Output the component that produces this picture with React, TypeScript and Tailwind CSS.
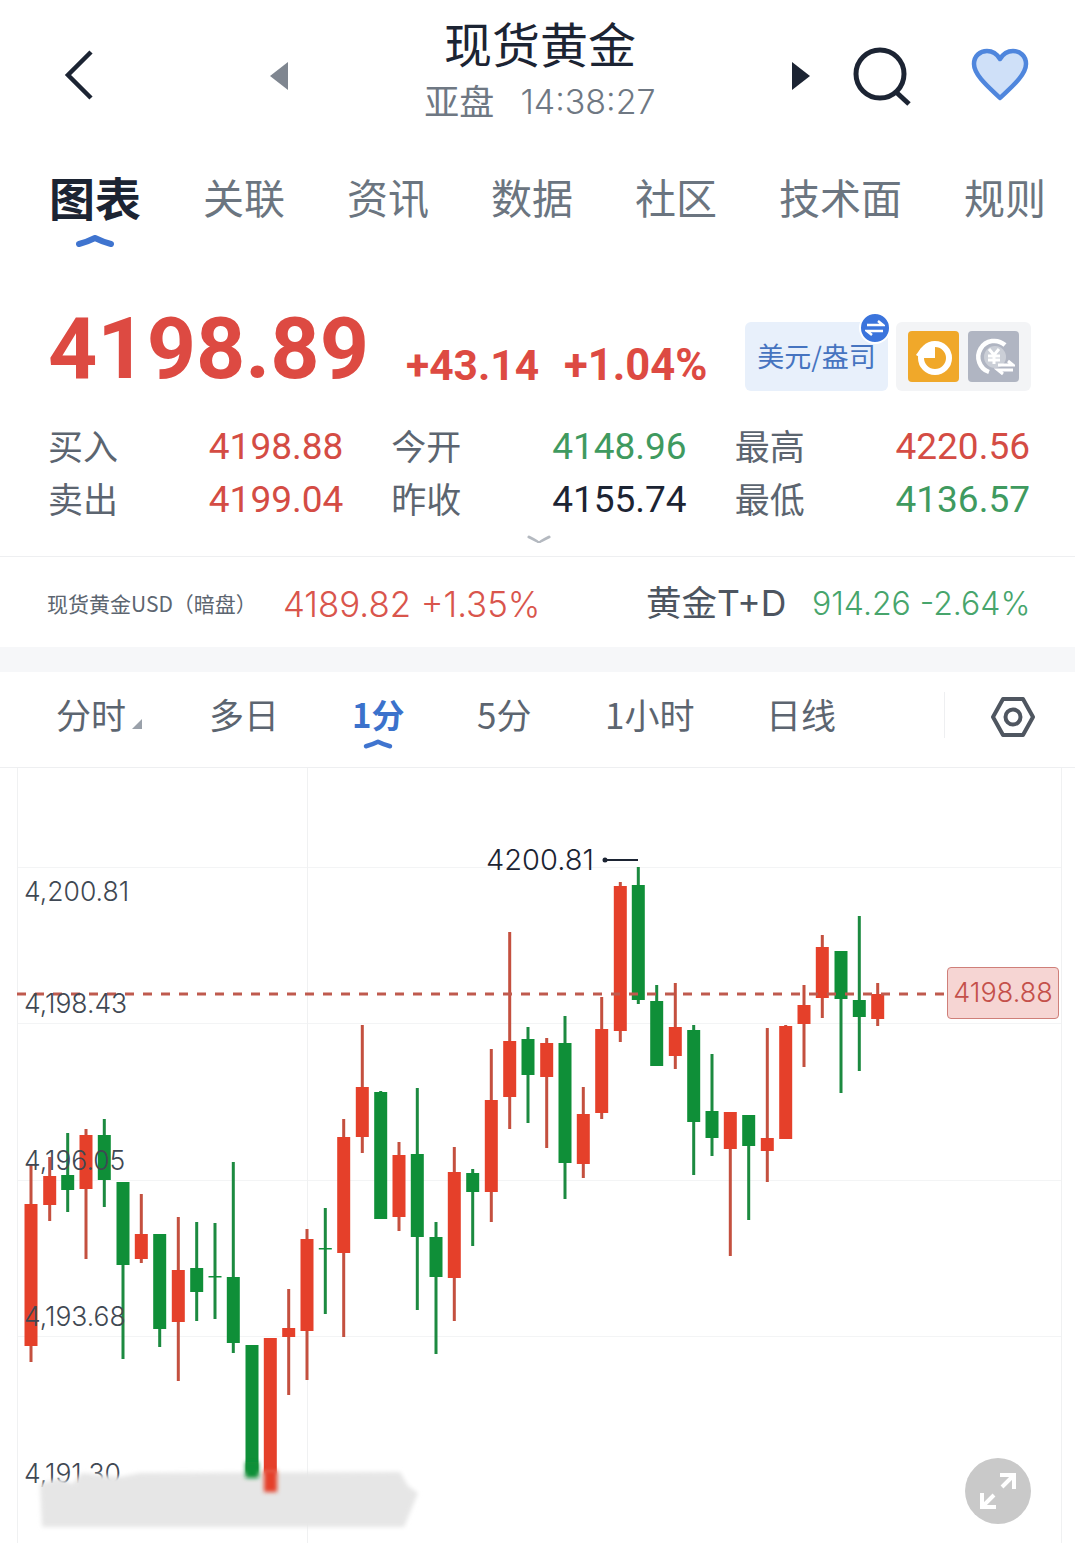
import React from "react";

const cjk = '"Noto Sans CJK SC", sans-serif';
const num = 'Roboto, "Noto Sans CJK SC", sans-serif';
const thin = 'Inter, "Noto Sans CJK SC", sans-serif';

// x, wickTop, bodyTop, bodyBottom, wickBottom, up(red)
const C: [number, number, number, number, number, number][] = [
  [31, 1165, 1204, 1346, 1362, 1],[49.7, 1157, 1176, 1205, 1221, 1],[67.7, 1133, 1175, 1190, 1212, 0],
  [86, 1129, 1135, 1189, 1259, 1],[104.3, 1119, 1135, 1180, 1207, 0],[123, 1182, 1182, 1265, 1359, 0],
  [141.3, 1194, 1234, 1259, 1263, 1],[159.7, 1234, 1234, 1329, 1347, 0],[178.3, 1217, 1270, 1322, 1381, 1],
  [196.7, 1222, 1268, 1292, 1321, 0],[215, 1223, 1276, 1277.5, 1319, 0],[233.3, 1162, 1277, 1343, 1353, 0],
  [252, 1345, 1345, 1476, 1476, 0],[270.3, 1338, 1338, 1478, 1478, 1],[288.7, 1289, 1328, 1337, 1395, 1],
  [307, 1229, 1239, 1331, 1380, 1],[325.3, 1208, 1248, 1249.5, 1314, 0],[343.7, 1119, 1137, 1253, 1337, 1],
  [362.3, 1025, 1087, 1137, 1153, 1],[380.7, 1091, 1092, 1219, 1219, 0],[399, 1142, 1155, 1217, 1231, 1],
  [417.3, 1088, 1154, 1237, 1310, 0],[436, 1222, 1237, 1277, 1354, 0],[454.3, 1147, 1172, 1278, 1321, 1],
  [472.7, 1169, 1173, 1192, 1246, 0],[491.3, 1049, 1100, 1192, 1222, 1],[509.7, 932, 1041, 1097, 1129, 1],
  [528, 1027, 1039, 1075, 1123, 0],[546.7, 1038, 1043, 1077, 1148, 1],[565, 1016, 1043, 1163, 1199, 0],
  [583.3, 1087, 1114, 1164, 1178, 1],[601.7, 997, 1029, 1113, 1119, 1],[620.3, 882, 886, 1031, 1042, 1],
  [638.3, 867, 885, 1000, 1004, 0],[656.7, 985, 1001, 1066, 1066, 0],[675.3, 983, 1027, 1056, 1069, 1],
  [693.7, 1025, 1030, 1122, 1175, 0],[712, 1054, 1111, 1138, 1156, 0],[730.3, 1112, 1112, 1149, 1256, 1],
  [748.7, 1115, 1115, 1146, 1220, 0],[767.3, 1028, 1138, 1151, 1182, 1],[785.7, 1025, 1026, 1139, 1139, 1],
  [804, 985, 1005, 1024, 1067, 1],[822.3, 935, 947, 998, 1018, 1],[841, 951, 951, 999, 1093, 0],
  [859.3, 916, 1000, 1017, 1071, 0],[877.7, 983, 994, 1019, 1026, 1],
];

function Stat({ label, value, color }: { label: string; value: string; color: string }) {
  return (
    <div className="flex h-[53px] items-center justify-between">
      <span className="pb-[4px] text-[35px] leading-none text-[#5c6570]" style={{ fontFamily: cjk }}>{label}</span>
      <span className={`text-[37px] font-normal leading-none ${color}`} style={{ fontFamily: num }}>{value}</span>
    </div>
  );
}

function Indicator({ w }: { w: number }) {
  return (
    <svg width={w} height="12" viewBox="0 0 40 12" className="absolute bottom-0 left-1/2 -translate-x-1/2">
      <path d="M4 9 Q12 7 20 3 Q28 7 36 9" fill="none" stroke="#3f74cf" strokeWidth="6" strokeLinecap="round" strokeLinejoin="round" />
    </svg>
  );
}

const tabs = ["关联", "资讯", "数据", "社区", "技术面", "规则"];

export default function App() {
  return (
    <div className="relative h-[1543px] w-[1075px] overflow-hidden bg-white" style={{ fontFamily: cjk }}>
      {/* header */}
      <div className="relative flex h-[138px] items-start">
        <svg width="32" height="52" viewBox="0 0 32 52" className="ml-[63px] mt-[49px] shrink-0">
          <path d="M28 3 L5 26 L28 49" fill="none" stroke="#1c2433" strokeWidth="4.5" />
        </svg>
        <svg width="20" height="30" viewBox="0 0 20 30" className="ml-[174px] mt-[61px] shrink-0">
          <path d="M19 1 L1 15 L19 29 Z" fill="#7f8690" />
        </svg>
        <div className="flex w-[502px] shrink-0 flex-col items-center pt-[13px]">
          <div className="text-[48px] leading-[58px] text-[#1c2433]">现货黄金</div>
          <div className="flex h-[61px] items-center gap-[26px] text-[#6f7883]">
            <span className="pb-[4px] text-[35px] leading-none">亚盘</span>
            <span className="text-[34px] font-light leading-none" style={{ fontFamily: thin }}>14:38:27</span>
          </div>
        </div>
        <svg width="20" height="30" viewBox="0 0 20 30" className="mt-[61px] shrink-0">
          <path d="M1 1 L19 15 L1 29 Z" fill="#1c2433" />
        </svg>
        <svg width="60" height="60" viewBox="0 0 60 60" className="ml-[42px] mt-[47px] shrink-0">
          <circle cx="27" cy="27" r="24" fill="none" stroke="#1c2433" strokeWidth="5" />
          <path d="M43 45 L56 57" stroke="#1c2433" strokeWidth="5" />
        </svg>
        <svg width="60" height="54" viewBox="0 0 60 54" className="ml-[57px] mt-[48px] shrink-0">
          <path d="M30 50 C22 42 4 28 4 16 C4 8 10 3 17 3 C23 3 27 6 30 11 C33 6 37 3 43 3 C50 3 56 8 56 16 C56 28 38 42 30 50 Z" fill="#cfe0f8" stroke="#4f86dd" strokeWidth="4.5" strokeLinejoin="round" />
        </svg>
      </div>

      {/* tabs */}
      <div className="flex h-[122px] items-start gap-[62px] pl-[49px] pt-[32px] whitespace-nowrap">
        <div className="relative h-[77px]">
          <span className="text-[46px] font-bold leading-[52px] text-[#1c2433]">图表</span>
          <Indicator w={40} />
        </div>
        {tabs.map((t) => (
          <span key={t} className="text-[41px] leading-[52px] text-[#6b7580]">{t}</span>
        ))}
      </div>

      {/* price */}
      <div className="flex h-[160px] items-start pl-[48px] pt-[39px]">
        <span className="w-[358px] text-[86px] font-bold leading-[100px] text-[#dd4a42]" style={{ fontFamily: num }}>4198.89</span>
        <span className="mt-[17px] w-[158px] text-[42.5px] font-bold leading-[100px] text-[#dd4a42]" style={{ fontFamily: num }}>+43.14</span>
        <span className="mt-[17px] w-[181px] text-[43.5px] font-bold leading-[100px] text-[#dd4a42]" style={{ fontFamily: num }}>+1.04%</span>
        <div className="relative mt-[23px] flex h-[69px] w-[143px] items-center justify-center rounded-[6px] bg-[#e8f0fb] text-[27px] text-[#4674c0]">
          美元/盎司
          <span className="absolute -top-[10px] right-[-3px] flex h-[32px] w-[32px] items-center justify-center rounded-full border-2 border-white bg-[#3b74dc]">
            <svg width="20" height="18" viewBox="0 0 20 18">
              <path d="M2 6 H18 L13 2 M18 12 H2 L7 16" fill="none" stroke="#fff" strokeWidth="2.5" />
            </svg>
          </span>
        </div>
        <div className="ml-[8px] mt-[23px] flex h-[69px] w-[135px] items-center justify-center gap-[9px] rounded-[6px] bg-[#f3f4f6]">
          <div className="flex h-[51px] w-[51px] items-center justify-center rounded-[4px] bg-[#f0a82a]">
            <svg width="42" height="42" viewBox="0 0 42 42">
              <circle cx="22" cy="22" r="14" fill="none" stroke="#fff" strokeWidth="6" />
              <path d="M22 22 L22 5 L8 12 L3 19 L8 22 Z" fill="#fff" />
              <path d="M22 22 V12 A10 10 0 0 1 32 22 Z" fill="#f0a82a" />
            </svg>
          </div>
          <div className="flex h-[51px] w-[51px] items-center justify-center rounded-[4px] bg-[#b0b5c2]">
            <svg width="42" height="42" viewBox="0 0 42 42">
              <path d="M32 9 A16 16 0 1 0 16 36" fill="none" stroke="#fff" strokeWidth="4.5" />
              <circle cx="22" cy="21" r="11" fill="#fff" fillOpacity="0.35" />
              <path d="M16 13 L21 19 L26 13 M21 19 V28 M15 20 H27 M15 24 H27" fill="none" stroke="#fff" strokeWidth="3" />
              <path d="M25 29 H40 L35 25 M40 34 H25 L30 38" fill="none" stroke="#fff" strokeWidth="3" />
            </svg>
          </div>
        </div>
      </div>

      {/* stats */}
      <div className="grid grid-cols-3 gap-x-[48px] pl-[48px] pr-[45px]">
        <div>
          <Stat label="买入" value="4198.88" color="text-[#d44c44]" />
          <Stat label="卖出" value="4199.04" color="text-[#d44c44]" />
        </div>
        <div>
          <Stat label="今开" value="4148.96" color="text-[#3f9a5f]" />
          <Stat label="昨收" value="4155.74" color="text-[#1c2433]" />
        </div>
        <div>
          <Stat label="最高" value="4220.56" color="text-[#d44c44]" />
          <Stat label="最低" value="4136.57" color="text-[#3f9a5f]" />
        </div>
      </div>
      <div className="flex h-[31px] justify-center border-b border-[#eeeff1] pl-[3px] pt-[8px]">
        <svg width="24" height="12" viewBox="0 0 24 12">
          <path d="M2 3 Q12 8 12 9 Q12 8 22 3" fill="none" stroke="#b4b9c0" strokeWidth="3" strokeLinecap="round" />
        </svg>
      </div>

      {/* related row */}
      <div className="flex h-[90px] items-center pt-[4px] whitespace-nowrap">
        <span className="ml-[47px] w-[236px] text-[21px] text-[#5c6570]">现货黄金USD（暗盘）</span>
        <span className="w-[363px] text-[34.8px] font-light text-[#d9554c]" style={{ fontFamily: thin }}>4189.82 +1.35%</span>
        <span className="w-[166px] text-[35.5px] text-[#4d5560]" style={{ fontFamily: thin }}>黄金T+D</span>
        <span className="text-[32px] font-light text-[#47a56c]" style={{ fontFamily: thin }}>914.26 -2.64%</span>
      </div>
      <div className="h-[25px] bg-[#f6f7f9]" />

      {/* chart tabs */}
      <div className="relative flex h-[96px] items-center border-b border-[#eeeff1] pb-[10px] text-[35px] text-[#5c6570] whitespace-nowrap">
        <span className="relative ml-[56px] w-[153px]">
          分时
          <span className="absolute left-[76px] top-[31px] h-0 w-0 border-b-[10px] border-l-[10px] border-b-[#9aa1aa] border-l-transparent" />
        </span>
        <span className="w-[143px]">多日</span>
        <span className="relative flex h-[52px] w-[125px] items-center text-[33px] font-bold text-[#3b72cc]">
          1分
          <span className="absolute bottom-[-9px] left-[26px] h-[12px] w-[30px] -translate-x-1/2">
            <Indicator w={30} />
          </span>
        </span>
        <span className="w-[128px]">5分</span>
        <span className="w-[161px]">1小时</span>
        <span className="w-[178px]">日线</span>
        <span className="h-[46px] w-px bg-[#eeeff1]" />
        <svg width="46" height="42" viewBox="0 0 46 42" className="ml-[45px] mt-[4px]">
          <path d="M13 3 H33 L43 21 L33 39 H13 L3 21 Z" fill="none" stroke="#4f5660" strokeWidth="4" strokeLinejoin="round" />
          <circle cx="23" cy="21" r="7.5" fill="none" stroke="#4f5660" strokeWidth="4" />
        </svg>
      </div>

      {/* chart */}
      <div className="relative h-[775px] w-full">
        <svg width="1075" height="775" viewBox="0 768 1075 775" className="absolute left-0 top-0">
          <defs>
            <filter id="soft" x="-40%" y="-40%" width="180%" height="180%"><feGaussianBlur stdDeviation="2" /></filter>
            <filter id="soft2" x="-40%" y="-40%" width="180%" height="180%"><feGaussianBlur stdDeviation="2" /></filter>
          </defs>
          {[867, 1023, 1180, 1336].map((y) => <rect key={y} x="17" y={y} width="1045" height="1" fill="#f3f4f5" />)}
          {[17, 307, 1061].map((x) => <rect key={x} x={x} y="768" width="1" height="775" fill="#f0f1f2" />)}
          {C.map(([x, wt, bt, bb, wb, up]) => (
            <g key={x}>
              <rect x={x - 1.5} y={wt} width="3" height={wb - wt} fill={up ? "#c4503f" : "#1c8a40"} />
              <rect x={x - 6.5} y={bt} width="13" height={bb - bt} fill={up ? "#e5402a" : "#0f8f38"} />
            </g>
          ))}
          <path d="M17 994 H945" stroke="#bf5a4e" strokeWidth="3" strokeDasharray="9 9" />
          <circle cx="605" cy="860" r="2.5" fill="#1c2433" />
          <path d="M605 860 H638" stroke="#1c2433" strokeWidth="2" />
        </svg>

        {[["4,200.81", 105], ["4,198.43", 217], ["4,196.05", 374], ["4,193.68", 530], ["4,191.30", 687]].map(([t, top]) => (
          <span key={t} className="absolute left-[24px] text-[26.5px] font-light leading-[32px] text-[#3f4853]" style={{ top: (top as number) + 2, fontFamily: thin }}>{t}</span>
        ))}
        <span className="absolute left-[486px] top-[75px] text-[29px] font-light leading-[34px] text-[#1c2433]" style={{ fontFamily: thin }}>4200.81</span>
        <div className="absolute left-[947px] top-[199px] flex h-[52px] w-[112px] items-center justify-center rounded-[4px] border border-[#cf7f79] bg-[#f6d5d3] text-[27px] font-light text-[#c4504a]" style={{ fontFamily: thin }}>4198.88</div>

        {/* blurred watermark */}
        <svg width="1075" height="775" viewBox="0 768 1075 775" className="absolute left-0 top-0">
          <path d="M40 1484 L60 1478 L72 1484 L82 1473 L120 1477 L140 1473 L400 1472 L408 1486 L418 1493 L404 1527 L42 1527 Z" fill="#e6e6e6" filter="url(#soft)" />
          <rect x="245.5" y="1462" width="13" height="16" fill="#0f8f38" filter="url(#soft2)" />
          <rect x="264" y="1470" width="13" height="22" fill="#e5402a" filter="url(#soft2)" />
        </svg>

        <button className="absolute left-[965px] top-[690px] flex h-[66px] w-[66px] items-center justify-center rounded-full bg-[#c9c9c9]">
          <svg width="40" height="40" viewBox="0 0 40 40">
            <path d="M22 4 H36 V18 M36 4 L24 16 M4 22 V36 H18 M4 36 L16 24" fill="none" stroke="#fff" strokeWidth="4" />
          </svg>
        </button>
      </div>
    </div>
  );
}
